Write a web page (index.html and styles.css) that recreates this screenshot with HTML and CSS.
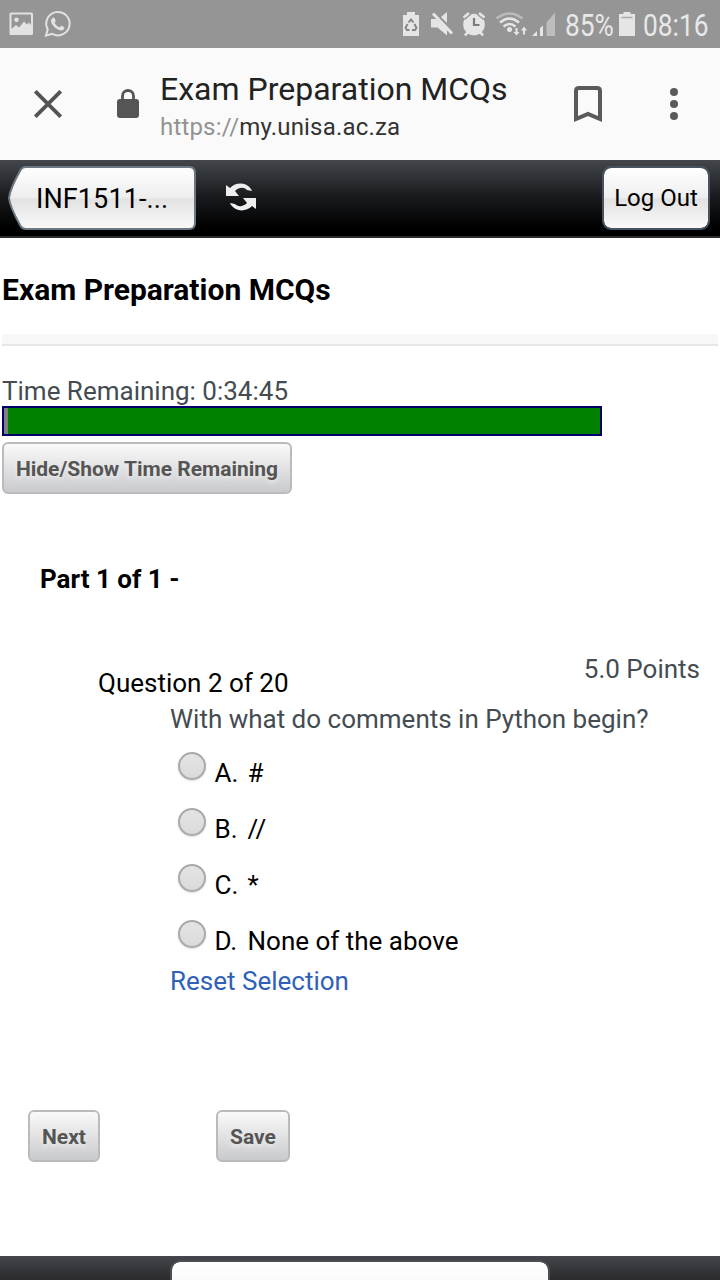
FILE: index.html
```
<!DOCTYPE html>
<html lang="en">
<head>
<meta charset="utf-8">
<title>Exam Preparation MCQs</title>
<link rel="stylesheet" href="styles.css">
</head>
<body>
<div class="status">
  <svg class="status-left" width="80" height="48" viewBox="0 0 80 48" fill="#e2e2e2">
    <path fill-rule="evenodd" d="M11 12.500h20.500a1.500 1.500 0 0 1 1.500 1.500v19.500a1.500 1.500 0 0 1-1.500 1.500h-20.500a1.500 1.500 0 0 1-1.500-1.500v-19.500a1.500 1.500 0 0 1 1.500-1.500zM11.500 14.500v14.500l4.500-4 3 2.500 5-6 3 3 2-2 2 2.500v-10.500zM16.500 17.500a2.300 2.300 0 1 1 0 4.600 2.300 2.300 0 0 1 0-4.600z"/>
    <path d="M46 35.500l1.700-6.200a11.700 11.700 0 1 1 4.600 4.600z" fill="none" stroke="#e2e2e2" stroke-width="2"/>
    <path d="M52.200 18.200c1-1 2-.9 2.500.2l1 2.300c.2.600-.9 1.600-1.200 2.100 1 2.100 2.700 3.600 5 4.500.7-.5 1.300-1.900 2-1.600l2.500 1.200c.8.500.1 2.300-.6 2.900-2 1.600-5.300.2-7.600-1.500-2.300-1.800-5.300-5.400-4.700-8 .2-.9.500-1.500 1.100-2.100z"/>
  </svg>
  <svg class="status-icons" width="160" height="48" viewBox="400 0 160 48" fill="#e5e5e5">
    <path d="M403 15h4v-3h8v3h4v21h-16z"/>
    <g fill="none" stroke="#858585" stroke-width="1.900"><path d="M408.500 22.500l2.500-3 2.500 3M414.500 24l2 4-1.500 2h-3M407.500 24l-2 4 1.500 2h2.500"/></g>
    <path d="M431 19h5l11 10v6.500l-9.500-8H431z"/>
    <path d="M441 17l6-5v11z"/>
    <path d="M433 13.500l19 20" fill="none" stroke="#e5e5e5" stroke-width="3"/>
    <circle cx="474" cy="24.500" r="10.800"/>
    <path d="M463.500 17.500l5.500-4.500M484.500 17.500l-5.500-4.500M467.500 32.500l-2.500 3M480.500 32.500l2.500 3" fill="none" stroke="#e5e5e5" stroke-width="2.600"/>
    <path d="M464.500 19.500l6.500-5.500M483.500 19.500l-6.500-5.500" fill="none" stroke="#959595" stroke-width="1.200"/>
    <path d="M474 18v7h5.500" fill="none" stroke="#7c7c7c" stroke-width="2.200"/>
    <g fill="none" stroke-width="2.500"><path d="M496.500 18.500q13-10 26 0" stroke="#bbb"/><path d="M500 22.500q9.500-8 19 0M503.500 26.500q6-5 12 0" stroke="#e5e5e5"/></g>
    <circle cx="509.500" cy="29.500" r="2.500"/>
    <path d="M515.500 28h2v4h2l-3 3.500-3-3.500h2zM523 34.500h2v-4h2l-3-4-3 4h2z"/>
    <path d="M532 36l5-5v5zM540 28l3-2.500v10.500h-3z"/>
    <path d="M546.500 22.500l8.500-10v23.500h-8.500z" fill="#bdbdbd"/>
  </svg>
  <span class="percent"><span class="narrow">85%</span></span>
  <svg class="battery" width="16" height="48" viewBox="0 0 16 48"><path d="M0 14h4.500v-2h7v2h4.500v22h-16z" fill="#e5e5e5"/><path d="M2.500 17.500h11" stroke="#aaa" stroke-width="1.500"/></svg>
  <span class="clock"><span class="narrow">08:16</span></span>
</div>
<header class="browser">
  <svg class="close" width="28" height="28" viewBox="0 0 28 28"><path d="M1.300 1.300l25.400 25.400M26.700 1.300L1.300 26.700" stroke="#555" stroke-width="3.800"/></svg>
  <svg class="lock" width="22" height="30" viewBox="0 0 22 30"><rect y="10" width="22" height="19" rx="3" fill="#555"/><path d="M5.500 11V7a5.500 5.500 0 0 1 11 0v4" fill="none" stroke="#555" stroke-width="2.800"/></svg>
  <div class="site">
    <div class="site-title">Exam Preparation MCQs</div>
    <div class="site-url">https://<span>my.unisa.ac.za</span></div>
  </div>
  <svg class="bookmark" width="28" height="36" viewBox="0 0 28 36"><path d="M2 33V5q0-3 3-3h18q3 0 3 3v28L14 28z" fill="none" stroke="#5a5a5a" stroke-width="4"/></svg>
  <svg class="dots" width="8" height="32" viewBox="0 0 8 32" fill="#5a5a5a"><circle cx="4" cy="4" r="4"/><circle cx="4" cy="16" r="4"/><circle cx="4" cy="28" r="4"/></svg>
</header>
<nav class="nav">
  <div class="back">
    <svg class="back-shape" width="188" height="64" viewBox="0 0 188 64">
      <defs><linearGradient id="pill" x2="0" y2="1"><stop offset="0" stop-color="#fff"/><stop offset=".49" stop-color="#eee"/><stop offset=".52" stop-color="#e2e2e2"/><stop offset="1" stop-color="#fafafa"/></linearGradient></defs>
      <path d="M18 1H181q6 0 6 6V57q0 6-6 6H18q-4 0-6-4Q2 41 1 32Q2 23 12 5q2-4 6-4z" fill="url(#pill)" stroke="#6c7984" stroke-width="2"/>
    </svg>
    <span class="back-text">INF1511-...</span>
  </div>
  <svg class="refresh" width="30" height="28" viewBox="0 0 30 28" fill="#eee"><path d="M0 2l4 3C10-1 20-1 25 6l1 2-5-1C18 4 13 4 9 8l4 5H0z"/><path d="M30 26l-4-3c-6 6-16 6-21-1l-1-2 5 1c3 3 8 3 12-1l-4-5h13z"/></svg>
  <div class="logout"><span>Log Out</span></div>
</nav>
<main class="content">
  <h1 class="heading"><span>Exam Preparation MCQs</span></h1>
  <div class="rule"></div>
  <div class="time"><span>Time Remaining: 0:34:45</span></div>
  <div class="progress"></div>
  <button class="btn toggle"><span>Hide/Show Time Remaining</span></button>
  <h2 class="part"><span>Part 1 of 1 -</span></h2>
  <div class="question-row"><span class="number">Question 2 of 20</span><span class="points">5.0 Points</span></div>
  <section class="question">
    <div class="prompt"><span>With what do comments in Python begin?</span></div>
    <div class="option"><i class="radio"></i><span class="letter">A.</span><span>#</span></div>
    <div class="option"><i class="radio"></i><span class="letter">B.</span><span>//</span></div>
    <div class="option"><i class="radio"></i><span class="letter">C.</span><span>*</span></div>
    <div class="option"><i class="radio"></i><span class="letter">D.</span><span class="none">None of the above</span></div>
    <div class="reset"><span>Reset Selection</span></div>
  </section>
  <div class="actions"><button class="btn next">Next</button><button class="btn save">Save</button></div>
</main>
<footer class="footer"><div class="footer-button"></div></footer>
</body>
</html>
```
FILE: styles.css
```
* { box-sizing: border-box; }
body { margin: 0; width: 720px; height: 1280px; overflow: hidden; background: #fff; font-family: Roboto, sans-serif; font-size: 26px; color: #000; display: flex; flex-direction: column; white-space: nowrap; }
svg { display: block; flex: none; }
.status { height: 48px; flex: none; background: #959595; display: flex; color: #e8e8e8; font-size: 31px; line-height: 51px; }
.status-icons { margin-left: 320px; }
.percent { width: 49px; margin-left: 5px; margin-right: 5px; }
.clock { margin-left: 8px; width: 69px; }
.narrow { display: inline-block; transform: scaleX(.85); transform-origin: left; }
.browser { height: 112px; flex: none; background: #fafafa; display: flex; align-items: center; padding: 0 42px 0 34px; }
.lock { margin-left: 55px; margin-top: -1px; }
.site { margin-left: 21px; width: 414px; padding-top: 8px; }
.site-title { font-size: 32px; line-height: 38px; color: #222; }
.site-url { font-size: 24px; line-height: 38px; color: #929292; letter-spacing: .18px; }
.site-url span { color: #333; }
.dots { margin-left: 68px; }
.nav { height: 78px; flex: none; background: linear-gradient(#43464b, #17191c 50%, #000 90%); border-bottom: 2px solid #2c2c2c; display: flex; align-items: flex-start; padding: 6px 10px 0 8px; }
.back { display: grid; width: 188px; height: 64px; }
.back > * { grid-area: 1 / 1; }
.back-text { font-size: 27px; line-height: 66px; letter-spacing: .1px; padding-left: 28px; z-index: 1; height: 64px; }
.refresh { margin: 17px 0 0 30px; }
.logout { margin-left: auto; width: 108px; height: 64px; border: 2px solid #465361; border-radius: 9px; background: linear-gradient(#fff, #eee 49%, #e2e2e2 52%, #fafafa); font-size: 24px; line-height: 60px; text-align: center; background-clip: padding-box; }
.content { height: 1018px; flex: none; padding: 30px 2px 0; }
.heading { margin: 0; font-size: 30px; line-height: 44px; }
.rule { margin-top: 22px; height: 12px; background: #f8f8f8; border-bottom: 2px solid #e7e7e7; }
.time { margin-top: 30px; line-height: 30px; color: #444c52; }
.progress { width: 600px; height: 30px; border: 2px solid #000066; background: linear-gradient(90deg, #808080 4px, #008000 4px); }
.btn { display: block; height: 52px; padding: 2px 0 0; border: 2px solid #bbbbbe; border-radius: 6px; background: linear-gradient(#fafafa, #c9cacd); font: bold 21px/46px Roboto, sans-serif; color: #555; text-shadow: 0 2px 4px #eee; text-align: center; }
.toggle { width: 290px; margin-top: 6px; }
.part { margin: 69px 0 0 38px; font-size: 26px; line-height: 32px; }
.question-row { display: flex; justify-content: space-between; margin-top: 58px; padding: 0 18px 0 96px; height: 51px; line-height: 32px; }
.number { padding-top: 14px; }
.points { color: #444c52; }
.question { margin-left: 168px; }
.prompt { height: 41px; line-height: 30px; color: #444c52; }
.option { height: 56px; line-height: 56px; display: flex; padding-left: 8px; }
.radio { width: 28px; height: 28px; margin: 7px 8.5px 0 0; border: 2px solid #aaa; border-radius: 50%; background: linear-gradient(#e4e4e4, #dadada); box-shadow: 0 1px 2px #ddd; }
.letter { width: 33px; }
.reset { margin-top: -4px; line-height: 32px; color: #3060b8; }
.actions { display: flex; gap: 116px; margin: 113px 0 0 26px; }
.next { width: 72px; }
.save { width: 74px; }
.footer { height: 24px; flex: none; overflow: hidden; background: linear-gradient(#43464b, #2b2a2e); padding: 4px 170px 0; }
.footer-button { height: 64px; border: 2px solid #4a4e53; border-radius: 10px; background: linear-gradient(#fff, #eee); background-clip: padding-box; }
```
